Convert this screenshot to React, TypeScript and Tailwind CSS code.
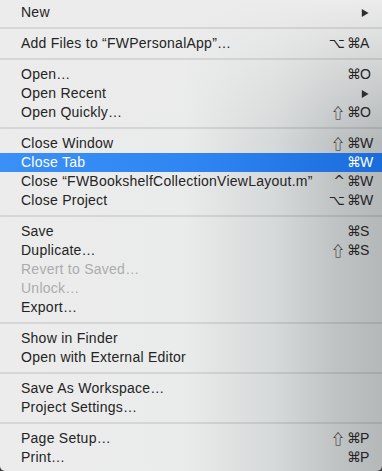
import React from "react";

type Item =
  | { sep: true }
  | {
      sep?: false;
      label: string;
      mods?: string;
      keyChar?: string;
      arrow?: boolean;
      disabled?: boolean;
      active?: boolean;
    };

const items: Item[] = [
  { label: "New", arrow: true },
  { sep: true },
  { label: "Add Files to \u201cFWPersonalApp\u201d\u2026", mods: "\u2325", keyChar: "A" },
  { sep: true },
  { label: "Open\u2026", mods: "", keyChar: "O" },
  { label: "Open Recent", arrow: true },
  { label: "Open Quickly\u2026", mods: "\u21e7", keyChar: "O" },
  { sep: true },
  { label: "Close Window", mods: "\u21e7", keyChar: "W" },
  { label: "Close Tab", mods: "", keyChar: "W", active: true },
  { label: "Close \u201cFWBookshelfCollectionViewLayout.m\u201d", mods: "^", keyChar: "W" },
  { label: "Close Project", mods: "\u2325", keyChar: "W" },
  { sep: true },
  { label: "Save", mods: "", keyChar: "S" },
  { label: "Duplicate\u2026", mods: "\u21e7", keyChar: "S" },
  { label: "Revert to Saved\u2026", disabled: true },
  { label: "Unlock\u2026", disabled: true },
  { label: "Export\u2026" },
  { sep: true },
  { label: "Show in Finder" },
  { label: "Open with External Editor" },
  { sep: true },
  { label: "Save As Workspace\u2026" },
  { label: "Project Settings\u2026" },
  { sep: true },
  { label: "Page Setup\u2026", mods: "\u21e7", keyChar: "P" },
  { label: "Print\u2026", mods: "", keyChar: "P" },
];

function Arrow({ white }: { white?: boolean }) {
  return (
    <svg width="8" height="10" viewBox="0 0 8 10" className="ml-[1px]">
      <path d="M0.8 1 L7.6 5 L0.8 9 Z" fill={white ? "#ffffff" : "#2e2e2e"} />
    </svg>
  );
}

function Mod({ m }: { m: string }) {
  if (!m) return null;
  if (m === "\u21e7") {
    return (
      <span
        className="text-[14px] leading-[19px] mr-[2px]"
        style={{ fontFamily: '"Noto Sans CJK JP", "DejaVu Sans", sans-serif' }}
      >
        {m}
      </span>
    );
  }
  return (
    <span
      className="text-[14px] leading-[19px] mr-[2px]"
      style={{ fontFamily: '"DejaVu Sans", sans-serif' }}
    >
      {m}
    </span>
  );
}

export default function App() {
  return (
    <div className="w-[382px] h-[471px] overflow-hidden bg-[#3a3a3a]">
      <div
        className="w-[382px] h-[471px] rounded-b-[5px] pt-[3px] pb-[4px] bg-[linear-gradient(to_bottom,rgba(236,236,236,1)_0%,rgba(236,236,236,0.6)_12%,rgba(236,236,236,0)_30%),linear-gradient(to_right,#ececec_0%,#eaebeb_48%,#d6d9d9_72%,#bfc3c3_88%,#b4b8b8_100%)]"
        style={{ fontFamily: '"Liberation Sans", Arial, sans-serif' }}
      >
        {items.map((it, i) => {
          if (it.sep) {
            return (
              <div key={i} className="h-[12px] flex items-center">
                <div className="h-[2px] w-full bg-[rgba(0,0,0,0.09)]" />
              </div>
            );
          }
          const color = it.active
            ? "text-white"
            : it.disabled
            ? "text-[#acacac]"
            : "text-[#242424]";
          return (
            <div
              key={i}
              className={`h-[19px] flex items-center pl-[21px] text-[14px] leading-[19px] ${color} ${
                it.active
                  ? "bg-[linear-gradient(to_right,#3b90f7_0%,#2f86f2_50%,#1a6cdb_100%)]"
                  : ""
              }`}
            >
              <span className="flex-1 whitespace-nowrap tracking-[0.25px]">{it.label}</span>
              {it.keyChar !== undefined ? (
                <span className="flex items-center">
                  <Mod m={it.mods || ""} />
                  <span
                    className="w-[13px] text-[14px] leading-[19px]"
                    style={{ fontFamily: '"DejaVu Sans", sans-serif' }}
                  >
                    {"\u2318"}
                  </span>
                  <span className="w-[22px] text-left">{it.keyChar}</span>
                </span>
              ) : it.arrow ? (
                <span className="w-[22px] flex items-center">
                  <Arrow white={it.active} />
                </span>
              ) : null}
            </div>
          );
        })}
      </div>
    </div>
  );
}
